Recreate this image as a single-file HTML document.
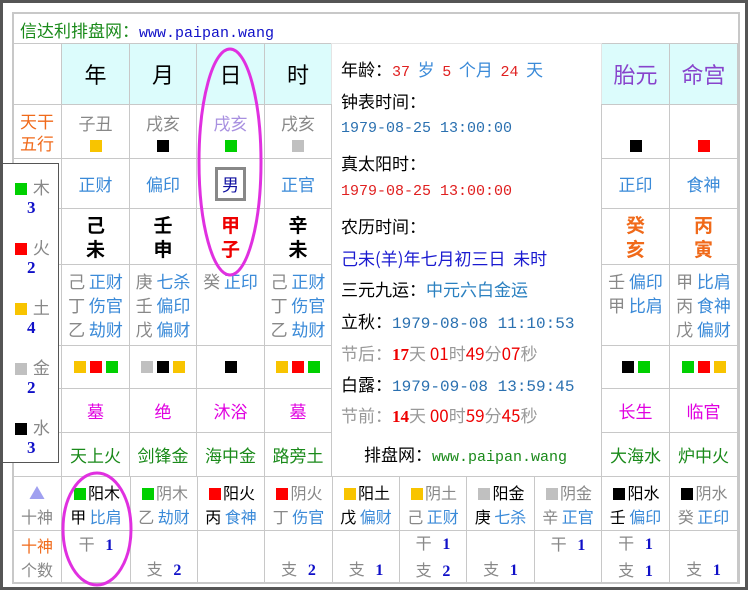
<!DOCTYPE html>
<html><head><meta charset="utf-8"><style>
body{margin:0;width:748px;height:590px;background:#fff;position:relative;overflow:hidden;font-family:"Liberation Serif","Noto Sans CJK SC",sans-serif;}
.frame{position:absolute;left:0;top:0;width:742px;height:584px;border:3px solid #555;}
.c{position:absolute;box-sizing:border-box;border:1px solid #c8c8c8;display:flex;flex-direction:column;align-items:center;justify-content:center;font-size:17px;line-height:22px;text-align:center;font-family:"Noto Sans CJK SC",sans-serif;}
.h{background:#dcfcfc;font-size:22px;}
.g{color:#888}.b{color:#3a8ad8}.k{color:#000}.r{color:#e00}.o{color:#f06a1a}.m{color:#e000e0}.gr{color:#1a8a1a}.nb{color:#1010c8;font-weight:bold;font-family:"Liberation Serif",serif}
.sq{display:inline-block;width:12px;height:12px;margin:0 2px;vertical-align:middle}
.Y{background:#f8c400}.R{background:#f00}.G{background:#00d000}.K{background:#000}.S{background:#c0c0c0}
.t{position:absolute;left:341px;font-size:17px;white-space:nowrap;font-family:"Noto Sans CJK SC",sans-serif;}
.mono{font-family:"Liberation Mono","Noto Sans CJK SC",monospace;font-size:15px;}
.bc{font-size:16px;line-height:24px}
</style></head><body>
<div class="frame"></div>
<div style="position:absolute;left:12px;top:12px;width:728px;height:572px;border:2px solid #c8c8c8;box-sizing:border-box"></div>
<div style="position:absolute;left:20px;top:17px;font-size:17px;font-family:'Noto Sans CJK SC',sans-serif;color:#1a8a1a">信达利排盘网：<span class="mono" style="color:#1010c8">www.paipan.wang</span></div>

<div class="c" style="left:12px;top:43px;width:50px;height:62px"></div>
<div class="c h" style="left:61px;top:43px;width:69px;height:62px">年</div>
<div class="c h" style="left:129px;top:43px;width:68px;height:62px">月</div>
<div class="c h" style="left:196px;top:43px;width:69px;height:62px">日</div>
<div class="c h" style="left:264px;top:43px;width:68px;height:62px">时</div>
<div class="c h" style="left:601px;top:43px;width:69px;height:62px;color:#8844cc">胎元</div>
<div class="c h" style="left:669px;top:43px;width:69px;height:62px;color:#8844cc">命宫</div>
<div class="c" style="left:331px;top:43px;width:271px;height:434px;border-color:#e4e4e4"></div>

<div class="c o" style="left:12px;top:104px;width:50px;height:55px">天干<br>五行</div>
<div class="c" style="left:61px;top:104px;width:69px;height:55px"><span class="g">子丑</span><span class="sq Y" style="margin-top:6px"></span></div>
<div class="c" style="left:129px;top:104px;width:68px;height:55px"><span class="g">戌亥</span><span class="sq K" style="margin-top:6px"></span></div>
<div class="c" style="left:196px;top:104px;width:69px;height:55px"><span style="color:#a890e0">戌亥</span><span class="sq G" style="margin-top:6px"></span></div>
<div class="c" style="left:264px;top:104px;width:68px;height:55px"><span class="g">戌亥</span><span class="sq S" style="margin-top:6px"></span></div>
<div class="c" style="left:601px;top:104px;width:69px;height:55px;justify-content:flex-end;padding-bottom:6px"><span class="sq K"></span></div>
<div class="c" style="left:669px;top:104px;width:69px;height:55px;justify-content:flex-end;padding-bottom:6px"><span class="sq R"></span></div>

<div class="c" style="left:12px;top:158px;width:50px;height:51px"></div>
<div class="c b" style="left:61px;top:158px;width:69px;height:51px">正财</div>
<div class="c b" style="left:129px;top:158px;width:68px;height:51px">偏印</div>
<div class="c" style="left:196px;top:158px;width:69px;height:51px"><span style="border:3px solid #888;padding:3px 4px;color:#1010a0">男</span></div>
<div class="c b" style="left:264px;top:158px;width:68px;height:51px">正官</div>
<div class="c b" style="left:601px;top:158px;width:69px;height:51px">正印</div>
<div class="c b" style="left:669px;top:158px;width:69px;height:51px">食神</div>

<div class="c" style="left:12px;top:208px;width:50px;height:57px"></div>
<div class="c k" style="left:61px;top:208px;width:69px;height:57px;font-weight:bold;font-size:19px;line-height:24px">己<br>未</div>
<div class="c k" style="left:129px;top:208px;width:68px;height:57px;font-weight:bold;font-size:19px;line-height:24px">壬<br>申</div>
<div class="c r" style="left:196px;top:208px;width:69px;height:57px;font-weight:bold;font-size:19px;line-height:24px">甲<br>子</div>
<div class="c k" style="left:264px;top:208px;width:68px;height:57px;font-weight:bold;font-size:19px;line-height:24px">辛<br>未</div>
<div class="c o" style="left:601px;top:208px;width:69px;height:57px;font-weight:bold;font-size:19px;line-height:24px">癸<br>亥</div>
<div class="c o" style="left:669px;top:208px;width:69px;height:57px;font-weight:bold;font-size:19px;line-height:24px">丙<br>寅</div>

<div class="c" style="left:12px;top:264px;width:50px;height:82px"></div>
<div class="c" style="left:61px;top:264px;width:69px;height:82px;justify-content:flex-start;padding-top:4px;line-height:24px"><div><span class="g">己</span> <span class="b">正财</span></div><div><span class="g">丁</span> <span class="b">伤官</span></div><div><span class="g">乙</span> <span class="b">劫财</span></div></div>
<div class="c" style="left:129px;top:264px;width:68px;height:82px;justify-content:flex-start;padding-top:4px;line-height:24px"><div><span class="g">庚</span> <span class="b">七杀</span></div><div><span class="g">壬</span> <span class="b">偏印</span></div><div><span class="g">戊</span> <span class="b">偏财</span></div></div>
<div class="c" style="left:196px;top:264px;width:69px;height:82px;justify-content:flex-start;padding-top:4px;line-height:24px"><div><span class="g">癸</span> <span class="b">正印</span></div></div>
<div class="c" style="left:264px;top:264px;width:68px;height:82px;justify-content:flex-start;padding-top:4px;line-height:24px"><div><span class="g">己</span> <span class="b">正财</span></div><div><span class="g">丁</span> <span class="b">伤官</span></div><div><span class="g">乙</span> <span class="b">劫财</span></div></div>
<div class="c" style="left:601px;top:264px;width:69px;height:82px;justify-content:flex-start;padding-top:4px;line-height:24px"><div><span class="g">壬</span> <span class="b">偏印</span></div><div><span class="g">甲</span> <span class="b">比肩</span></div></div>
<div class="c" style="left:669px;top:264px;width:69px;height:82px;justify-content:flex-start;padding-top:4px;line-height:24px"><div><span class="g">甲</span> <span class="b">比肩</span></div><div><span class="g">丙</span> <span class="b">食神</span></div><div><span class="g">戊</span> <span class="b">偏财</span></div></div>

<div class="c" style="left:12px;top:345px;width:50px;height:44px"></div>
<div class="c" style="left:61px;top:345px;width:69px;height:44px;flex-direction:row"><span class="sq Y"></span><span class="sq R"></span><span class="sq G"></span></div>
<div class="c" style="left:129px;top:345px;width:68px;height:44px;flex-direction:row"><span class="sq S"></span><span class="sq K"></span><span class="sq Y"></span></div>
<div class="c" style="left:196px;top:345px;width:69px;height:44px;flex-direction:row"><span class="sq K"></span></div>
<div class="c" style="left:264px;top:345px;width:68px;height:44px;flex-direction:row"><span class="sq Y"></span><span class="sq R"></span><span class="sq G"></span></div>
<div class="c" style="left:601px;top:345px;width:69px;height:44px;flex-direction:row"><span class="sq K"></span><span class="sq G"></span></div>
<div class="c" style="left:669px;top:345px;width:69px;height:44px;flex-direction:row"><span class="sq G"></span><span class="sq R"></span><span class="sq Y"></span></div>

<div class="c" style="left:12px;top:388px;width:50px;height:45px"></div>
<div class="c m" style="left:61px;top:388px;width:69px;height:45px">墓</div>
<div class="c m" style="left:129px;top:388px;width:68px;height:45px">绝</div>
<div class="c m" style="left:196px;top:388px;width:69px;height:45px">沐浴</div>
<div class="c m" style="left:264px;top:388px;width:68px;height:45px">墓</div>
<div class="c m" style="left:601px;top:388px;width:69px;height:45px">长生</div>
<div class="c m" style="left:669px;top:388px;width:69px;height:45px">临官</div>

<div class="c" style="left:12px;top:432px;width:50px;height:45px"></div>
<div class="c gr" style="left:61px;top:432px;width:69px;height:45px">天上火</div>
<div class="c gr" style="left:129px;top:432px;width:68px;height:45px">剑锋金</div>
<div class="c gr" style="left:196px;top:432px;width:69px;height:45px">海中金</div>
<div class="c gr" style="left:264px;top:432px;width:68px;height:45px">路旁土</div>
<div class="c gr" style="left:601px;top:432px;width:69px;height:45px">大海水</div>
<div class="c gr" style="left:669px;top:432px;width:69px;height:45px">炉中火</div>

<div class="t" style="top:56px">年龄：<span class="mono" style="color:#e02020">37</span>&nbsp; <span class="b">岁</span>&nbsp; <span class="mono" style="color:#e02020">5</span>&nbsp; <span class="b">个月</span>&nbsp; <span class="mono" style="color:#e02020">24</span>&nbsp; <span class="b">天</span></div>
<div class="t" style="top:88px">钟表时间：</div>
<div class="t mono" style="top:120px;color:#2a70b0">1979-08-25 13:00:00</div>
<div class="t" style="top:150px">真太阳时：</div>
<div class="t mono" style="top:183px;color:#e02020">1979-08-25 13:00:00</div>
<div class="t" style="top:213px">农历时间：</div>
<div class="t" style="top:245px;color:#1a1ad0">己未(羊)年七月初三日&nbsp; 未时</div>
<div class="t" style="top:276px">三元九运：<span style="color:#2a80c0">中元六白金运</span></div>
<div class="t" style="top:308px">立秋：<span class="mono" style="color:#2a70b0;font-size:16px">1979-08-08 11:10:53</span></div>
<div class="t" style="top:340px;color:#999">节后：<b style="color:#e00;font-family:'Liberation Serif'">17</b>天 <span style="color:#e00">01</span>时<span style="color:#e00">49</span>分<span style="color:#e00">07</span>秒</div>
<div class="t" style="top:371px">白露：<span class="mono" style="color:#2a70b0;font-size:16px">1979-09-08 13:59:45</span></div>
<div class="t" style="top:402px;color:#999">节前：<b style="color:#e00;font-family:'Liberation Serif'">14</b>天 <span style="color:#e00">00</span>时<span style="color:#e00">59</span>分<span style="color:#e00">45</span>秒</div>
<div class="t" style="top:441px;left:364px">排盘网：<span class="mono" style="color:#1a8a1a">www.paipan.wang</span></div>

<div class="c bc" style="left:12px;top:476px;width:50px;height:55px"><span style="color:#a0a0f0">▲</span><span class="g">十神</span></div>
<div class="c bc" style="left:61px;top:476px;width:70px;height:55px"><div><span class="sq G"></span><span class="k">阳木</span></div><div><span class="k">甲</span> <span class="b">比肩</span></div></div>
<div class="c bc" style="left:130px;top:476px;width:68px;height:55px"><div><span class="sq G"></span><span class="g">阴木</span></div><div><span class="g">乙</span> <span class="b">劫财</span></div></div>
<div class="c bc" style="left:197px;top:476px;width:68px;height:55px"><div><span class="sq R"></span><span class="k">阳火</span></div><div><span class="k">丙</span> <span class="b">食神</span></div></div>
<div class="c bc" style="left:264px;top:476px;width:69px;height:55px"><div><span class="sq R"></span><span class="g">阴火</span></div><div><span class="g">丁</span> <span class="b">伤官</span></div></div>
<div class="c bc" style="left:332px;top:476px;width:68px;height:55px"><div><span class="sq Y"></span><span class="k">阳土</span></div><div><span class="k">戊</span> <span class="b">偏财</span></div></div>
<div class="c bc" style="left:399px;top:476px;width:68px;height:55px"><div><span class="sq Y"></span><span class="g">阴土</span></div><div><span class="g">己</span> <span class="b">正财</span></div></div>
<div class="c bc" style="left:466px;top:476px;width:69px;height:55px"><div><span class="sq S"></span><span class="k">阳金</span></div><div><span class="k">庚</span> <span class="b">七杀</span></div></div>
<div class="c bc" style="left:534px;top:476px;width:68px;height:55px"><div><span class="sq S"></span><span class="g">阴金</span></div><div><span class="g">辛</span> <span class="b">正官</span></div></div>
<div class="c bc" style="left:601px;top:476px;width:69px;height:55px"><div><span class="sq K"></span><span class="k">阳水</span></div><div><span class="k">壬</span> <span class="b">偏印</span></div></div>
<div class="c bc" style="left:669px;top:476px;width:69px;height:55px"><div><span class="sq K"></span><span class="g">阴水</span></div><div><span class="g">癸</span> <span class="b">正印</span></div></div>

<div class="c bc" style="left:12px;top:530px;width:50px;height:54px"><span class="o">十神</span><span class="g">个数</span></div>
<div class="c bc" style="left:61px;top:530px;width:70px;height:54px;justify-content:flex-start"><div><span class="g">干</span>&nbsp;&nbsp;&nbsp;<span class="nb">1</span></div></div>
<div class="c bc" style="left:130px;top:530px;width:68px;height:54px;justify-content:flex-end"><div><span class="g">支</span>&nbsp;&nbsp;&nbsp;<span class="nb">2</span></div></div>
<div class="c bc" style="left:197px;top:530px;width:68px;height:54px"></div>
<div class="c bc" style="left:264px;top:530px;width:69px;height:54px;justify-content:flex-end"><div><span class="g">支</span>&nbsp;&nbsp;&nbsp;<span class="nb">2</span></div></div>
<div class="c bc" style="left:332px;top:530px;width:68px;height:54px;justify-content:flex-end"><div><span class="g">支</span>&nbsp;&nbsp;&nbsp;<span class="nb">1</span></div></div>
<div class="c bc" style="left:399px;top:530px;width:68px;height:54px"><div><span class="g">干</span>&nbsp;&nbsp;&nbsp;<span class="nb">1</span></div><div><span class="g">支</span>&nbsp;&nbsp;&nbsp;<span class="nb">2</span></div></div>
<div class="c bc" style="left:466px;top:530px;width:69px;height:54px;justify-content:flex-end"><div><span class="g">支</span>&nbsp;&nbsp;&nbsp;<span class="nb">1</span></div></div>
<div class="c bc" style="left:534px;top:530px;width:68px;height:54px;justify-content:flex-start"><div><span class="g">干</span>&nbsp;&nbsp;&nbsp;<span class="nb">1</span></div></div>
<div class="c bc" style="left:601px;top:530px;width:69px;height:54px"><div><span class="g">干</span>&nbsp;&nbsp;&nbsp;<span class="nb">1</span></div><div><span class="g">支</span>&nbsp;&nbsp;&nbsp;<span class="nb">1</span></div></div>
<div class="c bc" style="left:669px;top:530px;width:69px;height:54px;justify-content:flex-end"><div><span class="g">支</span>&nbsp;&nbsp;&nbsp;<span class="nb">1</span></div></div>

<div style="position:absolute;left:3px;top:163px;width:56px;height:300px;background:#fff;border:1px solid #555;border-left:none;box-sizing:border-box;font-family:'Noto Sans CJK SC',sans-serif;font-size:17px;text-align:center">
<div style="position:absolute;top:10px;left:10px"><span class="sq G"></span> <span class="g">木</span></div><div class="nb" style="position:absolute;top:34px;left:24px">3</div>
<div style="position:absolute;top:70px;left:10px"><span class="sq R"></span> <span class="g">火</span></div><div class="nb" style="position:absolute;top:94px;left:24px">2</div>
<div style="position:absolute;top:130px;left:10px"><span class="sq Y"></span> <span class="g">土</span></div><div class="nb" style="position:absolute;top:154px;left:24px">4</div>
<div style="position:absolute;top:190px;left:10px"><span class="sq S"></span> <span class="g">金</span></div><div class="nb" style="position:absolute;top:214px;left:24px">2</div>
<div style="position:absolute;top:250px;left:10px"><span class="sq K"></span> <span class="g">水</span></div><div class="nb" style="position:absolute;top:274px;left:24px">3</div>
</div>

<svg style="position:absolute;left:0;top:0" width="748" height="590">
<ellipse cx="230" cy="162" rx="31" ry="113" fill="none" stroke="#e030e0" stroke-width="3"/>
<ellipse cx="97" cy="529" rx="34" ry="56" fill="none" stroke="#e030e0" stroke-width="3"/>
</svg>
</body></html>
